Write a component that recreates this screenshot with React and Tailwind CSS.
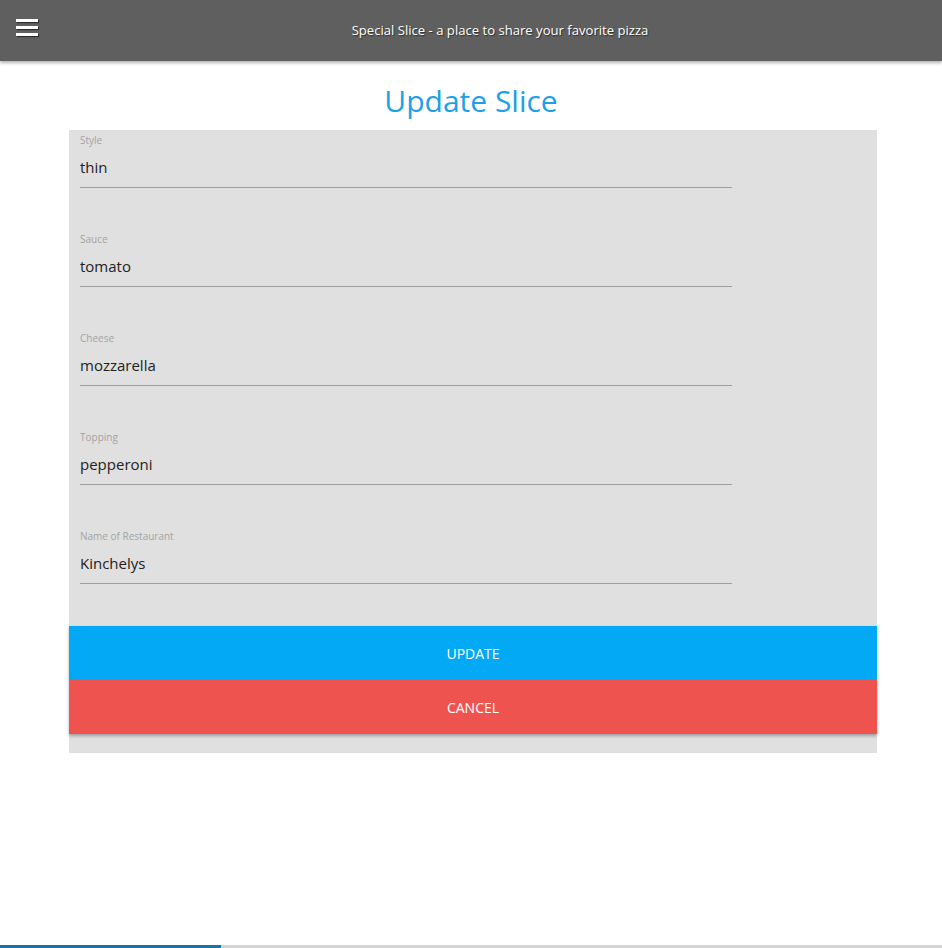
const fields = [
  { label: "Style", value: "thin" },
  { label: "Sauce", value: "tomato" },
  { label: "Cheese", value: "mozzarella" },
  { label: "Topping", value: "pepperoni" },
  { label: "Name of Restaurant", value: "Kinchelys" },
];

function Field({ label, value }) {
  return (
    <div className="h-[99px] pt-[3px]">
      <div className="text-[10px] leading-[14px] text-[#a3a3a3]">{label}</div>
      <div className="mt-[7px] h-[34px] border-b border-[#9e9e9e] pt-[2px] text-[15px] leading-[22px] text-[#222]">
        {value}
      </div>
    </div>
  );
}

export default function App() {
  return (
    <div className="flex min-h-[948px] flex-col bg-white font-['Open_Sans',sans-serif]">
      <header className="relative flex h-[61px] items-center justify-center bg-[#5f5f5f] shadow-[0_2px_3px_rgba(0,0,0,0.3)]">
        <button className="absolute left-[16px] top-[19px] flex flex-col gap-[4px]">
          <span className="block h-[3px] w-[22px] bg-white shadow-[1px_1px_1px_rgba(0,0,0,0.6)]" />
          <span className="block h-[3px] w-[22px] bg-white shadow-[1px_1px_1px_rgba(0,0,0,0.6)]" />
          <span className="block h-[3px] w-[22px] bg-white shadow-[1px_1px_1px_rgba(0,0,0,0.6)]" />
        </button>
        <h1 className="ml-[58px] text-[13.1px] text-white [text-shadow:1px_1px_1px_rgba(0,0,0,0.5)]">
          Special Slice - a place to share your favorite pizza
        </h1>
      </header>

      <h2 className="mt-[20px] text-center text-[30px] leading-[40px] text-[#1e9fe8]">Update Slice</h2>

      <main className="mx-[69px] mt-[9px] w-[808px] bg-[#e0e0e0] pb-[19px]">
        <div className="px-[11px]">
          <div className="w-[652px]">
            {fields.map((f) => (
              <Field key={f.label} {...f} />
            ))}
          </div>
        </div>
        <div className="mt-[1px] shadow-[0_2px_3px_rgba(0,0,0,0.3)]">
          <button className="block h-[54px] w-full bg-[#03a9f4] text-[14px] uppercase text-white">Update</button>
          <button className="block h-[54px] w-full bg-[#ef5350] text-[14px] uppercase text-white">Cancel</button>
        </div>
      </main>

      <div className="flex-1" />
      <div className="flex h-[3px]">
        <div className="w-[221px] bg-[#1476a8]" />
        <div className="flex-1 bg-[#d4d4d4]" />
      </div>
    </div>
  );
}
